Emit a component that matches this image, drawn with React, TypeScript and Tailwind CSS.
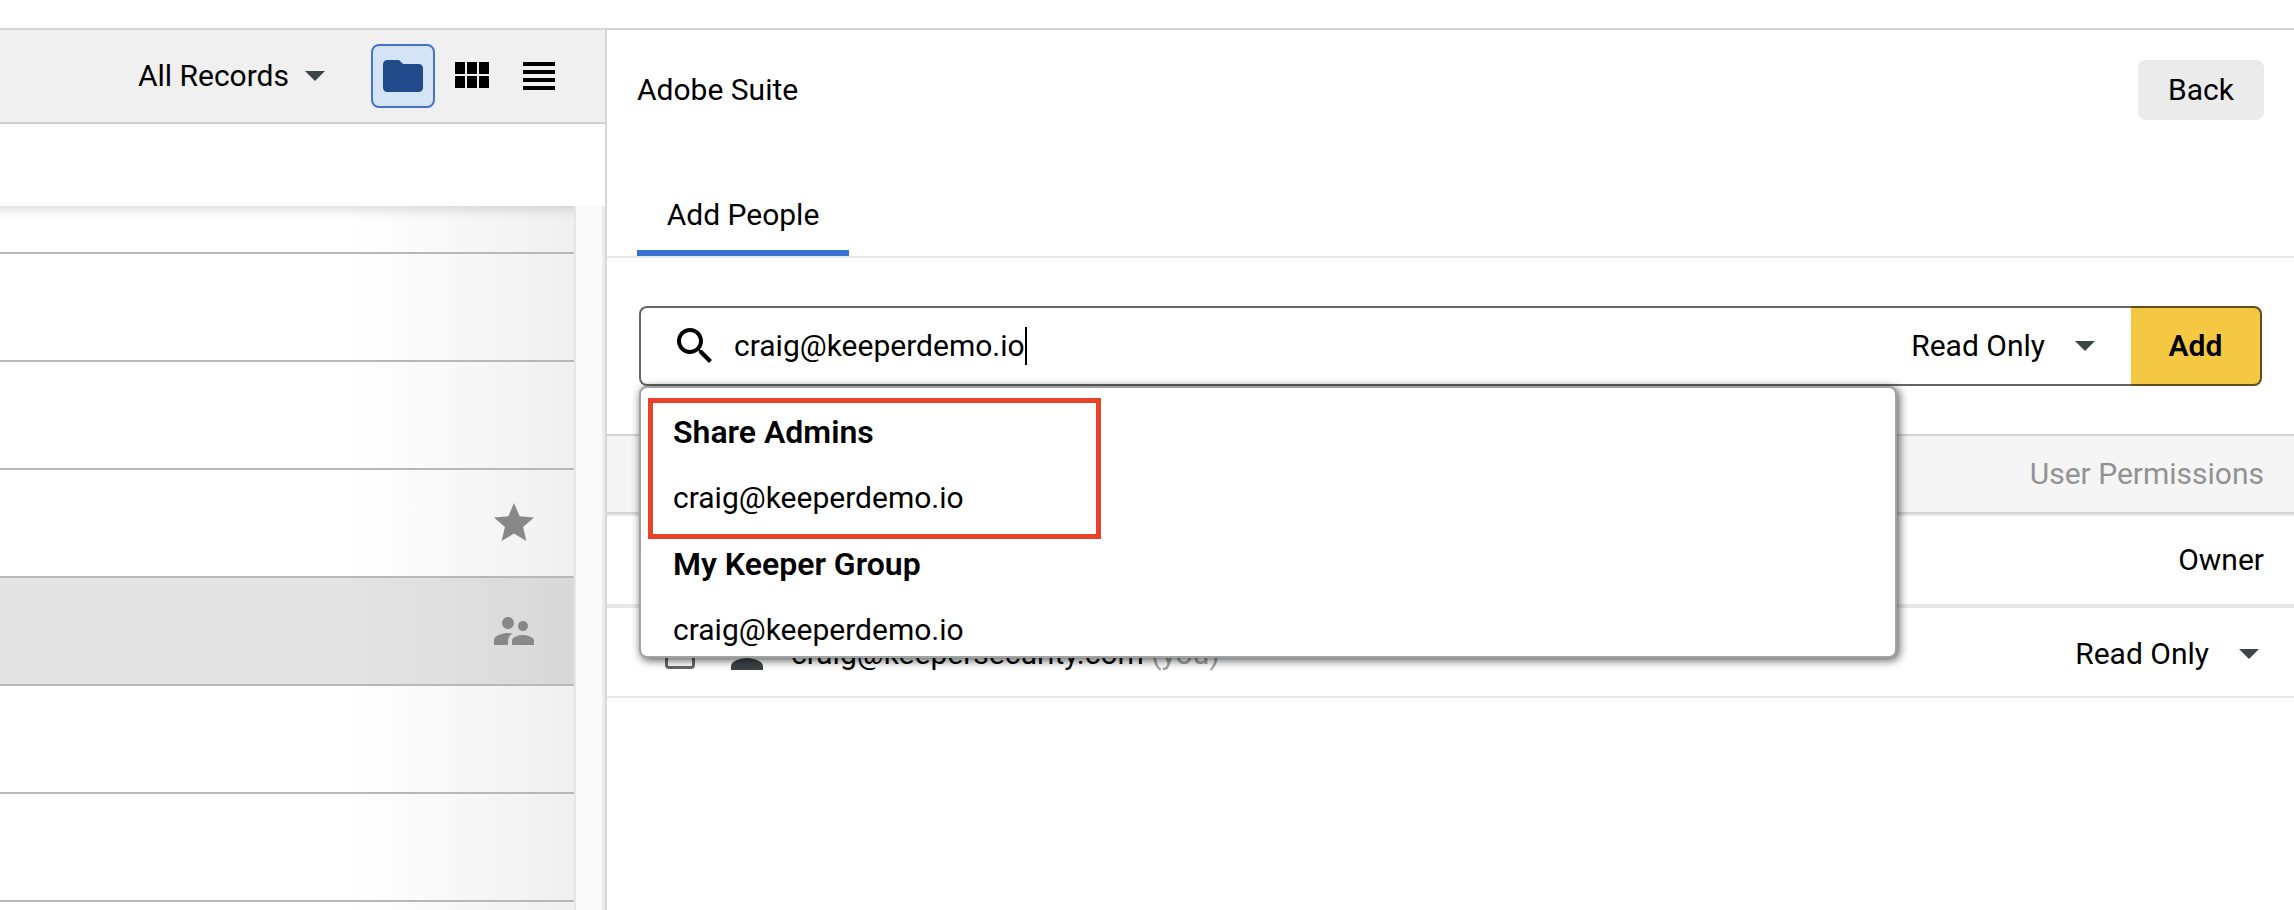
import React, { useState } from "react";

type IconProps = { d: string; className: string };

function Icon({ d, className }: IconProps) {
  return (
    <svg viewBox="0 0 24 24" fill="currentColor" aria-hidden="true" className={className}>
      <path d={d} />
    </svg>
  );
}

function Caret() {
  return (
    <svg viewBox="0 0 20 10" aria-hidden="true" className="pointer-events-none h-2.5 w-5 shrink-0 fill-[#3c4446]">
      <path d="M0 0l10 10L20 0z" />
    </svg>
  );
}

const icons = {
  folder: "M10 4H4c-1.1 0-1.99.9-1.99 2L2 18c0 1.1.9 2 2 2h16c1.1 0 2-.9 2-2V8c0-1.1-.9-2-2-2h-8l-2-2z",
  grid: "M4 11h5V5H4v6zm0 7h5v-6H4v6zm6 0h5v-6h-5v6zm6 0h5v-6h-5v6zm-6-7h5V5h-5v6zm6-6v6h5V5h-5z",
  list: "M4 15h16v-2H4v2zm0 4h16v-2H4v2zm0-8h16V9H4v2zm0-6v2h16V5H4z",
  star: "M12 17.27L18.18 21l-1.64-7.03L22 9.24l-7.19-.61L12 2 9.19 8.63 2 9.24l5.46 4.73L5.82 21z",
  people:
    "M16.5 12c1.38 0 2.49-1.12 2.49-2.5S17.88 7 16.5 7C15.12 7 14 8.12 14 9.5s1.12 2.5 2.5 2.5zM9 11c1.66 0 2.99-1.34 2.99-3S10.66 5 9 5C7.34 5 6 6.34 6 8s1.34 3 3 3zm7.5 3c-1.83 0-5.5.92-5.5 2.75V19h11v-2.25c0-1.83-3.67-2.75-5.5-2.75zM9 13c-2.33 0-7 1.17-7 3.5V19h7v-2.25c0-.85.33-2.34 2.37-3.47C10.5 13.1 9.66 13 9 13z",
  search:
    "M15.5 14h-.79l-.28-.27C15.41 12.59 16 11.11 16 9.5 16 5.91 13.09 3 9.5 3S3 5.91 3 9.5 5.91 16 9.5 16c1.61 0 3.09-.59 4.23-1.57l.27.28v.79l5 4.99L20.49 19l-4.99-5zm-6 0C7.01 14 5 11.99 5 9.5S7.01 5 9.5 5 14 7.01 14 9.5 11.99 14 9.5 14z",
  person: "M12 12c2.21 0 4-1.79 4-4s-1.79-4-4-4-4 1.79-4 4 1.79 4 4 4zm0 2c-2.67 0-8 1.34-8 4v2h16v-2c0-2.66-5.33-4-8-4z",
};

const plain = "bg-linear-to-r from-white from-60% to-[#f0f0f0]";
const selected = "bg-linear-to-r from-[#e4e4e4] from-60% to-[#d8d8d8]";

const records = [
  { icon: "", active: false },
  { icon: "", active: false },
  { icon: icons.star, active: false },
  { icon: icons.people, active: true },
  { icon: "", active: false },
  { icon: "", active: false },
];

function RecordList() {
  return (
    <section className="flex flex-col border-r-2 border-[#d6d6d6]">
      <div className="flex h-[94px] items-center justify-end border-b-2 border-[#d0d0d0] bg-[#f0f0f0] pr-[42px]">
        <button type="button" className="flex items-center gap-4">
          All Records
          <Caret />
        </button>
        <button
          type="button"
          aria-label="Folder view"
          className="ml-[46px] flex size-16 items-center justify-center rounded-lg border-2 border-[#4573c9] bg-[#d5e3f6] text-[#204a8a]"
        >
          <Icon d={icons.folder} className="size-12 shrink-0" />
        </button>
        <button type="button" aria-label="Grid view" className="ml-3">
          <Icon d={icons.grid} className="size-12" />
        </button>
        <button type="button" aria-label="List view" className="ml-5">
          <Icon d={icons.list} className="size-12" />
        </button>
      </div>
      <div className="mt-[82px] flex flex-1">
        <ul className="flex flex-1 flex-col border-r-2 border-[#e6e6e6]">
          <li className={`h-12 border-b-2 border-[#b8b8b8] shadow-[inset_0_16px_14px_-14px_rgba(0,0,0,0.18)] ${plain}`} />
          {records.map((r, i) => (
            <li
              key={i}
              className={`flex h-[108px] items-center justify-end border-b-2 border-[#b8b8b8] pr-9 text-[#888888] ${r.active ? selected : plain}`}
            >
              {r.icon && <Icon d={r.icon} className="size-12" />}
            </li>
          ))}
          <li className={`flex-1 ${plain}`} />
        </ul>
        <div className="w-[29px] border-r-3 border-[#ececec] bg-[#fafafa]" />
      </div>
    </section>
  );
}

function Group({ name, email }: { name: string; email: string }) {
  return (
    <div className="flex flex-col gap-[30px]">
      <h3 className="text-[32px] leading-9 font-semibold">{name}</h3>
      <button type="button" className="text-left">
        {email}
      </button>
    </div>
  );
}

function AddForm() {
  const [query, setQuery] = useState("craig@keeperdemo.io");
  return (
    <form className="relative z-10 mx-8 my-12 flex h-20" onSubmit={(e) => e.preventDefault()}>
      <div className="flex flex-1 items-center rounded-l-lg border-2 border-r-0 border-[#666666] pr-9 pl-[30px]">
        <Icon d={icons.search} className="size-12 shrink-0" />
        <div className="ml-[15px] flex flex-1 items-center">
          <input
            aria-label="Email address"
            value={query}
            onChange={(e) => setQuery(e.target.value)}
            className="field-sizing-content outline-none"
          />
          <span className="h-[38px] w-0.5 bg-black" />
        </div>
        <select aria-label="Permission for new person" className="mr-[30px] field-sizing-content appearance-none bg-transparent">
          <option>Read Only</option>
        </select>
        <Caret />
      </div>
      <button
        type="submit"
        className="w-[131px] rounded-r-lg border-y-2 border-r-2 border-[#5f4d1c] bg-[#f5c843] text-center font-semibold"
      >
        Add
      </button>
      <div className="absolute top-full left-0 flex w-[77.5%] flex-col gap-[30px] rounded-lg border-2 border-[#a0a3a3] bg-white px-8 pt-[26px] pb-2 shadow-[2px_2px_10px_rgba(0,0,0,0.7)]">
        <Group name="Share Admins" email={query} />
        <Group name="My Keeper Group" email={query} />
        <div className="pointer-events-none absolute top-2.5 left-[7px] h-[141px] w-[453px] border-5 border-[#e8432a]" />
      </div>
    </form>
  );
}

function SharePanel() {
  return (
    <main className="flex flex-col">
      <header className="px-[30px] pt-[30px]">
        <div className="flex h-[60px] items-center justify-between">
          <h1>Adobe Suite</h1>
          <button type="button" className="h-[60px] w-[126px] rounded-lg bg-[#ebebeb]">
            Back
          </button>
        </div>
      </header>
      <nav className="mt-[58px] flex border-b-2 border-[#e8e8e8] px-[30px]">
        <button type="button" className="h-[78px] w-[212px] border-b-6 border-[#3b71d2] pt-0.5">
          Add People
        </button>
      </nav>
      <AddForm />
      <table className="w-full border-separate border-spacing-0">
        <thead>
          <tr className="bg-[#f5f5f5] text-[#929292]">
            <td className="h-20 border-y-2 border-[#d4d4d4]" />
            <th scope="col" className="h-20 border-y-2 border-[#d4d4d4] pr-[30px] text-right font-normal">
              User Permissions
            </th>
          </tr>
        </thead>
        <tbody>
          <tr>
            <td className="h-[94px] border-t-2 border-b-4 border-[#e8e8e8]" />
            <td className="h-[94px] border-t-2 border-b-4 border-[#e8e8e8] pr-[30px] text-right">Owner</td>
          </tr>
          <tr>
            <td className="h-[90px] border-b-2 border-[#e8e8e8] pt-1 pl-[58px]">
              <label className="flex items-center">
                <input type="checkbox" className="size-[30px] appearance-none rounded-sm border-3 border-[#666666]" />
                <Icon d={icons.person} className="ml-7 size-12 text-[#3c4446]" />
                <span className="ml-5">
                  craig@keepersecurity.com <span className="text-[#a0a0a0]">(you)</span>
                </span>
              </label>
            </td>
            <td className="h-[90px] border-b-2 border-[#e8e8e8] pt-1 pr-[35px]">
              <div className="flex items-center justify-end gap-[30px]">
                <select aria-label="Permission for craig@keepersecurity.com" className="field-sizing-content appearance-none bg-transparent">
                  <option>Read Only</option>
                </select>
                <Caret />
              </div>
            </td>
          </tr>
        </tbody>
      </table>
    </main>
  );
}

export default function App() {
  return (
    <div className="flex min-h-screen flex-col bg-white font-[Roboto,sans-serif] text-[30px] leading-9 text-black">
      <div className="h-[30px] border-b-2 border-[#d6d6d6]" />
      <div className="grid flex-1 grid-cols-[607fr_1687fr]">
        <RecordList />
        <SharePanel />
      </div>
    </div>
  );
}
